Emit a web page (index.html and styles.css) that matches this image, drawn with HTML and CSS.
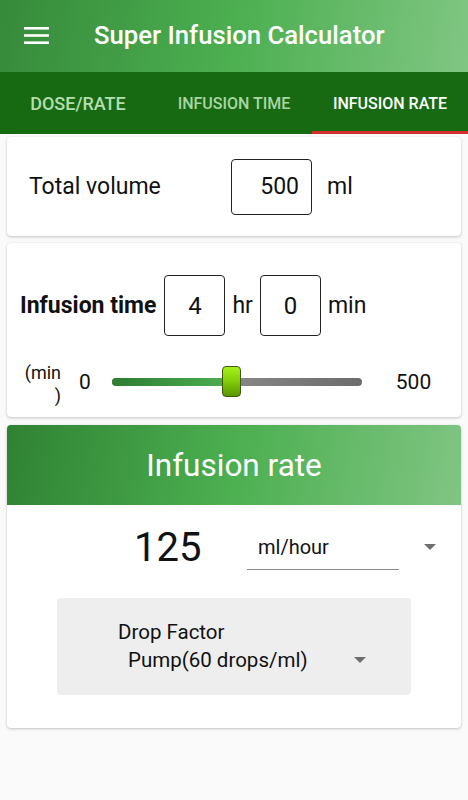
FILE: index.html
```html
<!DOCTYPE html>
<html>
<head>
<meta charset="utf-8">
<link rel="stylesheet" href="styles.css">
</head>
<body>
<div class="app">
  <header class="appbar">
    <svg class="menu" width="25" height="19" viewBox="0 0 25 19"><rect x="0" y="1" width="25" height="2.6" fill="#fff"/><rect x="0" y="8.2" width="25" height="2.6" fill="#fff"/><rect x="0" y="15.4" width="25" height="2.6" fill="#fff"/></svg>
    <h1 class="title">Super Infusion Calculator</h1>
  </header>
  <nav class="tabs">
    <div class="tab tab-big">DOSE/RATE</div>
    <div class="tab">INFUSION TIME</div>
    <div class="tab active">INFUSION RATE</div>
  </nav>

  <section class="card card-volume">
    <span class="label">Total volume</span>
    <div class="box box-volume">500</div>
    <span class="unit">ml</span>
  </section>

  <section class="card card-time">
    <div class="time-row">
      <span class="label bold">Infusion time</span>
      <div class="box box-sq">4</div>
      <span class="unit-sm">hr</span>
      <div class="box box-sq">0</div>
      <span class="unit-sm">min</span>
    </div>
    <div class="slider-row">
      <div class="min-label">(min<br>)</div>
      <span class="range-end">0</span>
      <div class="track">
        <div class="fill" style="width:48%"></div>
        <div class="thumb" style="left:44%"></div>
      </div>
      <span class="range-end max">500</span>
    </div>
  </section>

  <section class="card card-rate">
    <div class="rate-head">Infusion rate</div>
    <div class="rate-row">
      <span class="rate-value">125</span>
      <div class="select">ml/hour</div>
      <span class="caret"></span>
    </div>
    <div class="drop-box">
      <div class="drop-label">Drop Factor</div>
      <div class="drop-value"><span>Pump(60 drops/ml)</span><span class="caret"></span></div>
    </div>
  </section>
</div>
</body>
</html>
```

FILE: styles.css
```css
* { box-sizing: border-box; }
html, body { margin: 0; padding: 0; }
body {
  background: #fafafa;
  font-family: Roboto, "Noto Sans", sans-serif;
  color: #111;
  width: 468px;
  height: 800px;
  overflow: hidden;
}
.appbar {
  height: 72px;
  display: flex;
  align-items: center;
  padding-left: 24px;
  background: linear-gradient(100deg, #368a3a 0%, #4caf50 50%, #80c683 100%);
}
.menu { display: block; margin-top: -2px; }
.title {
  margin: -2px 0 0 45px;
  font-size: 25.7px;
  font-weight: 500;
  color: #fff;
}
.tabs {
  height: 62px;
  display: flex;
  background: #186a12;
}
.tab {
  flex: 1 1 0;
  display: flex;
  align-items: center;
  justify-content: center;
  font-size: 16px;
  font-weight: 500;
  color: #a9d6a4;
  border-bottom: 3px solid transparent;
  padding-top: 3px;
}
.tab-big { font-size: 18px; color: #b4deb0; }
.tab.active { color: #fff; border-bottom-color: #d32f2f; }

.card {
  background: #fff;
  margin: 0 7px;
  border-radius: 4px;
  box-shadow: 0 1px 3px rgba(0,0,0,0.22), 0 0 1px rgba(0,0,0,0.08);
}
.card-volume {
  margin-top: 3px;
  height: 99px;
  display: flex;
  align-items: center;
  padding-left: 22px;
}
.label { font-size: 23px; }
.card-volume .label { width: 202px; }
.bold { font-weight: 700; }
.box {
  border: 1px solid #222;
  border-radius: 4px;
  font-size: 23px;
  display: flex;
  align-items: center;
}
.box-volume {
  width: 81px;
  height: 56px;
  justify-content: flex-end;
  padding-right: 12px;
}
.unit { font-size: 23px; margin-left: 15px; }

.card-time {
  margin-top: 7px;
  height: 174px;
  padding: 32px 0 0 13px;
}
.time-row { display: flex; align-items: center; height: 61px; }
.time-row .label { margin-right: 8px; }
.box-sq {
  width: 61px;
  height: 61px;
  justify-content: center;
  font-size: 24px;
}
.unit-sm { font-size: 23px; margin: 0 7px; }
.slider-row {
  display: flex;
  align-items: center;
  height: 46px;
  margin-top: 23px;
}
.min-label {
  width: 38px;
  margin-left: 3px;
  text-align: right;
  font-size: 18px;
  line-height: 23px;
  margin-top: 3px;
}
.range-end { font-size: 21px; margin-left: 18px; }
.range-end.max { margin-left: 34px; }
.track {
  position: relative;
  width: 250px;
  height: 8px;
  margin-left: 21px;
  border-radius: 4px;
  background: linear-gradient(90deg, #a0a0a0, #6c6c6c);
}
.fill {
  height: 8px;
  border-radius: 4px 0 0 4px;
  background: linear-gradient(90deg, #2e7d32, #4db151);
}
.thumb {
  position: absolute;
  top: -12px;
  width: 19px;
  height: 31px;
  border-radius: 4px;
  border: 1px solid #3b5a10;
  background: linear-gradient(180deg, #a6f01c 0%, #86d10a 45%, #5a9600 100%);
}

.card-rate {
  margin-top: 8px;
  height: 303px;
  overflow: hidden;
}
.rate-head {
  height: 80px;
  display: flex;
  align-items: center;
  justify-content: center;
  color: #fff;
  font-size: 31.5px;
  background: linear-gradient(100deg, #2f8233 0%, #4caf50 50%, #80c583 100%);
}
.rate-row {
  height: 84px;
  display: flex;
  align-items: center;
  padding-left: 127px;
}
.rate-value { font-size: 40px; width: 113px; }
.select {
  width: 152px;
  height: 46px;
  display: flex;
  align-items: center;
  padding-left: 11px;
  font-size: 20px;
  border-bottom: 1px solid #888;
}
.caret {
  width: 0;
  height: 0;
  border-left: 6.5px solid transparent;
  border-right: 6.5px solid transparent;
  border-top: 6.5px solid #6e6e6e;
  margin-left: 25px;
}
.drop-box {
  margin: 9px 50px 0;
  height: 97px;
  background: #eeeeee;
  border-radius: 4px;
  padding: 20px 0 0 61px;
  font-size: 20.5px;
  line-height: 28px;
}
.drop-value {
  display: flex;
  align-items: center;
  padding-left: 10px;
}
.drop-value .caret { margin-left: 46px; }
```
